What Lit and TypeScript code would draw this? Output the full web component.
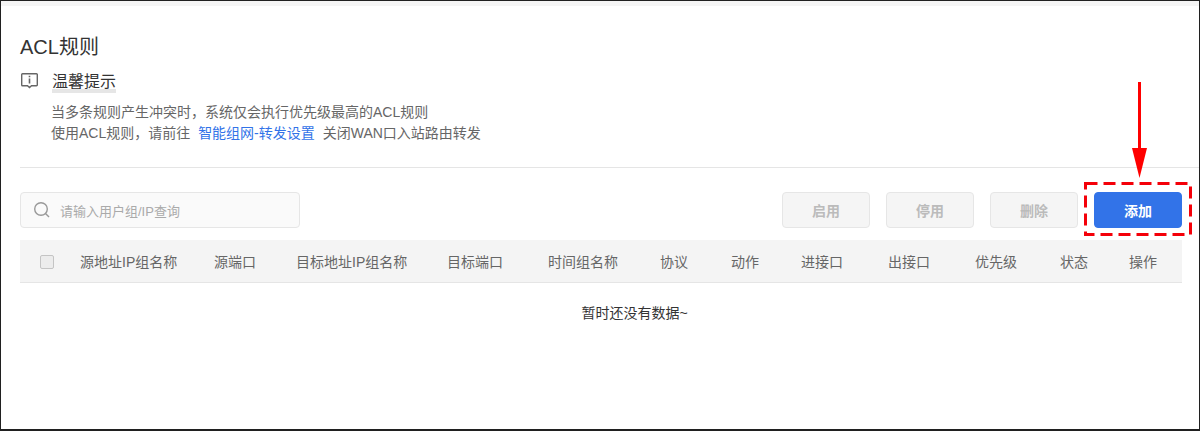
import { LitElement, html, css } from "lit";
import { customElement } from "lit/decorators.js";

const COLS: [string, number][] = [
  ["源地址IP组名称", 134],
  ["源端口", 82],
  ["目标地址IP组名称", 151],
  ["目标端口", 101],
  ["时间组名称", 112],
  ["协议", 71],
  ["动作", 70],
  ["进接口", 87],
  ["出接口", 87],
  ["优先级", 85],
  ["状态", 69],
  ["操作", 53],
];

@customElement("app-root")
export class AppRoot extends LitElement {
  static styles = css`
    :host {
      display: block;
      position: relative;
      width: 1200px;
      height: 431px;
      box-sizing: border-box;
      background: #fff;
      border-style: solid;
      border-color: #202020;
      border-width: 1px 1px 2px 1px;
      overflow: hidden;
      font-family: "Liberation Sans", "Noto Sans CJK SC", sans-serif;
      color: #333;
    }
    .topband { height: 5px; background: #f5f5f5; }
    .main { padding: 0 0 0 19px; }
    .title { margin: 26px 0 0; font-size: 20px; line-height: 30px; font-weight: 400; color: #333; }
    .tip { display: flex; align-items: center; gap: 12px; height: 22px; margin-top: 9px; }
    .tip svg { width: 20px; height: 20px; flex: none; }
    .tip-label { font-size: 16px; line-height: 22px; color: #333; box-shadow: inset 0 -4px 0 #e6e6e6; }
    .desc { margin: 9px 0 0 31px; font-size: 14px; line-height: 21px; color: #666; }
    .desc a { color: #3273e8; text-decoration: none; margin: 0 4px; }
    .rule { height: 1px; background: #e5e5e5; margin-top: 23px; }
    .toolbar { display: flex; align-items: center; margin-top: 24px; padding-right: 17px; height: 36px; }
    .search { width: 280px; height: 36px; box-sizing: border-box; border: 1px solid #e6e6e6; border-radius: 4px; background: #fafafa; display: flex; align-items: center; gap: 9px; padding-left: 12px; font-size: 13px; color: #aaa; }
    .search svg { width: 18px; height: 18px; flex: none; }
    .actions { margin-left: auto; display: flex; gap: 16px; }
    .btn { width: 88px; height: 36px; box-sizing: border-box; border: 1px solid #e6e6e6; border-radius: 4px; background: #f5f5f5; color: #bbb; font-size: 14px; font-weight: 700; display: flex; align-items: center; justify-content: center; }
    .btn.primary { background: #3273e8; border-color: #3273e8; color: #fff; }
    .thead { display: flex; align-items: center; height: 42px; margin-top: 12px; margin-right: 17px; background: #f4f4f4; border-bottom: 1px solid #e5e5e5; font-size: 14px; color: #666; }
    .check { width: 60px; flex: none; box-sizing: border-box; padding: 1px 0 0 20px; }
    .check i { display: block; width: 14px; height: 14px; box-sizing: border-box; border-radius: 2px; border: 1px solid #c4c4c4; background: #ececec; }
    .cell { flex: none; white-space: nowrap; }
    .empty { text-align: center; margin-right: 17px; padding-left: 67px; margin-top: 19px; font-size: 14px; line-height: 22px; color: #333; }
    .mark { position: absolute; left: 1083px; top: 181px; width: 108px; height: 54px; }
    .arrow { position: absolute; left: 1129px; top: 80px; width: 20px; height: 98px; }
  `;

  render() {
    return html`
      <div class="topband"></div>
      <div class="main">
        <h1 class="title">ACL规则</h1>
        <div class="tip">
          <svg viewBox="0 0 20 20" fill="none" stroke="#666" stroke-width="1.4">
            <path d="M2.500 1.700h14a.8.8 0 0 1 .8.8v10.400a.8.8 0 0 1-.8.8h-5l-2 1.800-2-1.800h-5a.8.8 0 0 1-.8-.8V2.500a.8.8 0 0 1 .8-.8z" />
            <path d="M9.500 6.500v5M9.500 3.700v1.500" stroke-width="1.600" />
          </svg>
          <span class="tip-label">温馨提示</span>
        </div>
        <div class="desc">
          <div>当多条规则产生冲突时，系统仅会执行优先级最高的ACL规则</div>
          <div>使用ACL规则，请前往 <a href="#">智能组网-转发设置</a> 关闭WAN口入站路由转发</div>
        </div>
        <div class="rule"></div>
        <div class="toolbar">
          <div class="search">
            <svg viewBox="0 0 18 18" fill="none" stroke="#999" stroke-width="1.400">
              <circle cx="8" cy="8" r="6.300" />
              <path d="M12.500 12.500l3.500 3.500" />
            </svg>
            <span>请输入用户组/IP查询</span>
          </div>
          <div class="actions">
            <div class="btn">启用</div>
            <div class="btn">停用</div>
            <div class="btn">删除</div>
            <div class="btn primary">添加</div>
          </div>
        </div>
        <div class="thead">
          <div class="check"><i></i></div>
          ${COLS.map(([t, w]) => html`<div class="cell" style="width:${w}px">${t}</div>`)}
        </div>
        <div class="empty">暂时还没有数据~</div>
      </div>
      <svg class="mark" viewBox="0 0 108 54" fill="none">
        <rect x="1.500" y="1.500" width="105" height="51" stroke="#f40009" stroke-width="3" stroke-dasharray="12 6" />
      </svg>
      <svg class="arrow" viewBox="0 0 20 98">
        <rect x="8" y="1" width="3" height="67" fill="#ff0000" />
        <path d="M2 67h15L9.500 97z" fill="#ff0000" />
      </svg>
    `;
  }
}
